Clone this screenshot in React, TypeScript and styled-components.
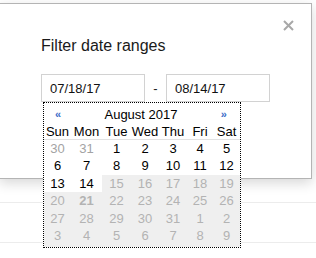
import styled, { createGlobalStyle } from "styled-components";

const GlobalStyle = createGlobalStyle`
  html, body {
    margin: 0;
    padding: 0;
    background: #fff;
  }
  body {
    font-family: "Liberation Sans", Arial, sans-serif;
  }
`;

const Page = styled.div`
  position: relative;
  width: 316px;
  height: 258px;
  overflow: hidden;
  background: #fff;
`;

const Backdrop = styled.div`
  display: flex;
  flex-direction: column;
  padding-top: 163px;
`;

const BackRow = styled.div`
  height: 39px;
  border-bottom: 1px solid #ececec;
`;

const Dialog = styled.div`
  position: absolute;
  left: -1px;
  top: 3px;
  width: 313px;
  height: 176px;
  box-sizing: border-box;
  background: #fff;
  border: 1px solid #b4b4b4;
  box-shadow: 0 4px 12px rgba(0, 0, 0, 0.16);
  padding: 32px 0 0 41px;
`;

const CloseButton = styled.button`
  position: absolute;
  top: 16px;
  right: 17px;
  width: 11px;
  height: 11px;
  padding: 0;
  border: 0;
  background: none;
  display: flex;
`;

const Title = styled.h2`
  margin: 0;
  font-size: 16px;
  line-height: 19px;
  font-weight: normal;
  color: #1a1a1a;
`;

const RangeRow = styled.div`
  position: relative;
  display: flex;
  align-items: center;
  margin-top: 19px;
`;

const DateInput = styled.input`
  width: 104px;
  height: 28px;
  box-sizing: border-box;
  border: 1px solid #d2d2d2;
  padding: 0 0 0 8px;
  font-family: "Liberation Sans", Arial, sans-serif;
  font-size: 13px;
  color: #111;
  outline: none;
`;

const Dash = styled.span`
  width: 21px;
  text-align: center;
  font-size: 13px;
  color: #222;
`;

const Calendar = styled.div`
  position: absolute;
  left: 2px;
  top: 28px;
  width: 198px;
  box-sizing: border-box;
  background: #fff;
  border: 1px dotted #000;
  font-size: 13px;
  color: #000;
`;

const MonthRow = styled.div`
  display: flex;
  align-items: center;
  justify-content: space-between;
  height: 21px;
  padding: 0 13px 0 11px;
`;

const Arrow = styled.span`
  font-size: 11px;
  font-weight: bold;
  color: #3b6cc7;
`;

const MonthLabel = styled.span`
  line-height: 21px;
  padding-top: 1px;
`;

const columns = "27px 31px 29px 28px 28px 26px 27px";

const WeekRow = styled.div`
  display: grid;
  grid-template-columns: ${columns};
  height: 15px;
  line-height: 15px;
  border-bottom: 1px solid #e2e2e2;
  text-align: center;
`;

const DayGrid = styled.div`
  display: grid;
  grid-template-columns: ${columns};
  grid-template-rows: repeat(5, 17.4px) 19.6px;
  text-align: center;
`;

interface DayProps {
  $tone: "current" | "other" | "disabled";
  $today?: boolean;
}

const Day = styled.div<DayProps>`
  line-height: 17.4px;
  background: ${(p) => (p.$tone === "disabled" ? "#efefef" : "#fff")};
  color: ${(p) =>
    p.$tone === "current" ? "#000" : p.$tone === "other" ? "#a3a3a3" : "#b3b3b3"};
  font-weight: ${(p) => (p.$today ? "bold" : "normal")};
`;

const weekdays = ["Sun", "Mon", "Tue", "Wed", "Thu", "Fri", "Sat"];

const days: { n: number; tone: DayProps["$tone"]; today?: boolean }[] = [];
[30, 31].forEach((n) => days.push({ n, tone: "other" }));
for (let n = 1; n <= 31; n++) {
  days.push({ n, tone: n <= 14 ? "current" : "disabled", today: n === 21 });
}
for (let n = 1; n <= 9; n++) days.push({ n, tone: "disabled" });

export default function App() {
  return (
    <Page>
      <GlobalStyle />
      <Backdrop>
        <BackRow />
        <BackRow />
      </Backdrop>
      <Dialog>
        <CloseButton aria-label="Close">
          <svg width="11" height="11" viewBox="0 0 11 11">
            <path d="M1 1L10 10M10 1L1 10" stroke="#a8a8a8" strokeWidth="2" />
          </svg>
        </CloseButton>
        <Title>Filter date ranges</Title>
        <RangeRow>
          <DateInput defaultValue="07/18/17" />
          <Dash>-</Dash>
          <DateInput defaultValue="08/14/17" />
          <Calendar>
            <MonthRow>
              <Arrow>«</Arrow>
              <MonthLabel>August 2017</MonthLabel>
              <Arrow>»</Arrow>
            </MonthRow>
            <WeekRow>
              {weekdays.map((d) => (
                <span key={d}>{d}</span>
              ))}
            </WeekRow>
            <DayGrid>
              {days.map((d, i) => (
                <Day key={i} $tone={d.tone} $today={d.today}>
                  {d.n}
                </Day>
              ))}
            </DayGrid>
          </Calendar>
        </RangeRow>
      </Dialog>
    </Page>
  );
}
